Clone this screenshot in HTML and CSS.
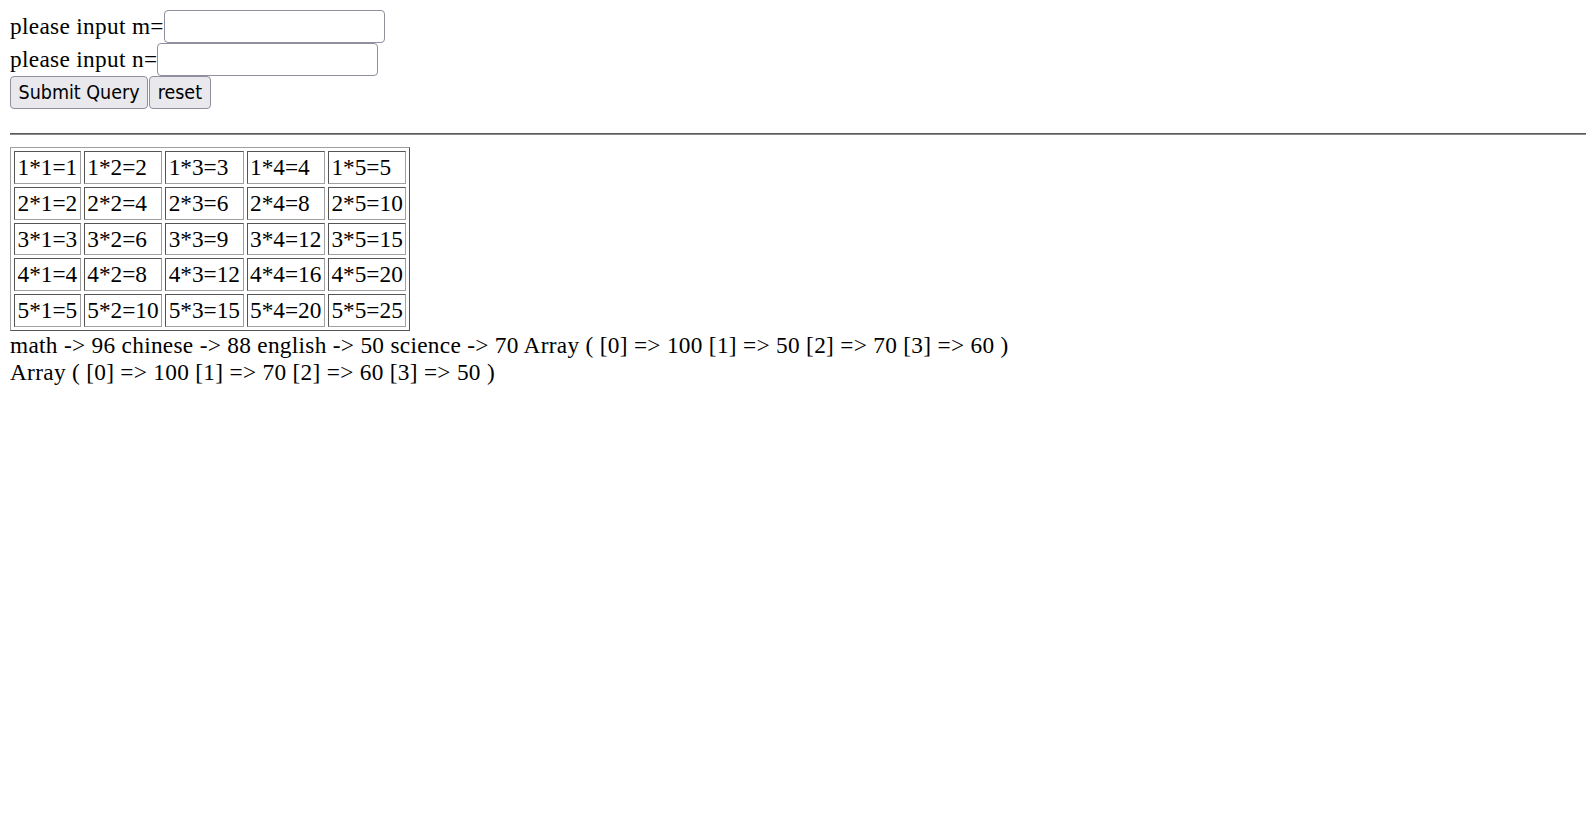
FILE: index.html
```html
<!DOCTYPE html>
<html>
<head>
<meta charset="utf-8">
<link rel="stylesheet" href="styles.css">
</head>
<body>
<form class="form">
  <div class="line">please input m=<input class="field" type="text"></div>
  <div class="line">please input n=<input class="field" type="text"></div>
  <div class="line"><button class="btn" type="button">Submit Query</button><button class="btn" type="button">reset</button></div>
</form>
<hr class="rule">
<table class="grid">
  <tr><td>1*1=1</td><td>1*2=2</td><td>1*3=3</td><td>1*4=4</td><td>1*5=5</td></tr>
  <tr><td>2*1=2</td><td>2*2=4</td><td>2*3=6</td><td>2*4=8</td><td>2*5=10</td></tr>
  <tr><td>3*1=3</td><td>3*2=6</td><td>3*3=9</td><td>3*4=12</td><td>3*5=15</td></tr>
  <tr><td>4*1=4</td><td>4*2=8</td><td>4*3=12</td><td>4*4=16</td><td>4*5=20</td></tr>
  <tr><td>5*1=5</td><td>5*2=10</td><td>5*3=15</td><td>5*4=20</td><td>5*5=25</td></tr>
</table>
<div class="out">math -&gt; 96 chinese -&gt; 88 english -&gt; 50 science -&gt; 70 Array ( [0] =&gt; 100 [1] =&gt; 50 [2] =&gt; 70 [3] =&gt; 60 )<br>Array ( [0] =&gt; 100 [1] =&gt; 70 [2] =&gt; 60 [3] =&gt; 50 )</div>
</body>
</html>
```

FILE: styles.css
```css
html {
  background: #fff;
  overflow: hidden;
}
body {
  margin: 10px;
  font-family: "Liberation Serif", "Times New Roman", serif;
  font-size: 23.3px;
  color: #000;
}
.form {
  margin: 0;
}
.line {
  display: flex;
  align-items: center;
  height: 33px;
  letter-spacing: 0.32px;
}
.field {
  box-sizing: border-box;
  width: 221px;
  height: 33px;
  margin: 0;
  padding: 2px 4px;
  border: 1px solid #8f8f9d;
  border-radius: 4px;
  background: #fff;
  font-family: "DejaVu Sans", sans-serif;
  font-size: 18px;
}
.btn {
  box-sizing: border-box;
  height: 33px;
  margin: 0 1px 0 0;
  padding: 0 7.5px;
  border: 1px solid #8f8f9d;
  border-radius: 4px;
  background: #e9e9ed;
  color: #000;
  font-family: "DejaVu Sans Condensed", "DejaVu Sans", sans-serif;
  font-size: 19.5px;
  letter-spacing: 0;
}
.rule {
  box-sizing: border-box;
  width: 1600px;
  margin: 24px 0 12px 0;
  height: 2px;
  border: 0;
  border-top: 1px solid #5a5a5a;
  border-bottom: 1px solid #8a8a8a;
}
.grid {
  border: 1px solid;
  border-color: #a0a0a0 #555 #555 #a0a0a0;
  border-spacing: 3px;
}
.grid td {
  border: 1px solid;
  border-color: #555 #a0a0a0 #a0a0a0 #555;
  padding: 2px 2.5px;
  line-height: 26.8px;
}
.out {
  line-height: 27px;
  padding-top: 1px;
  letter-spacing: 0.3px;
}
```
